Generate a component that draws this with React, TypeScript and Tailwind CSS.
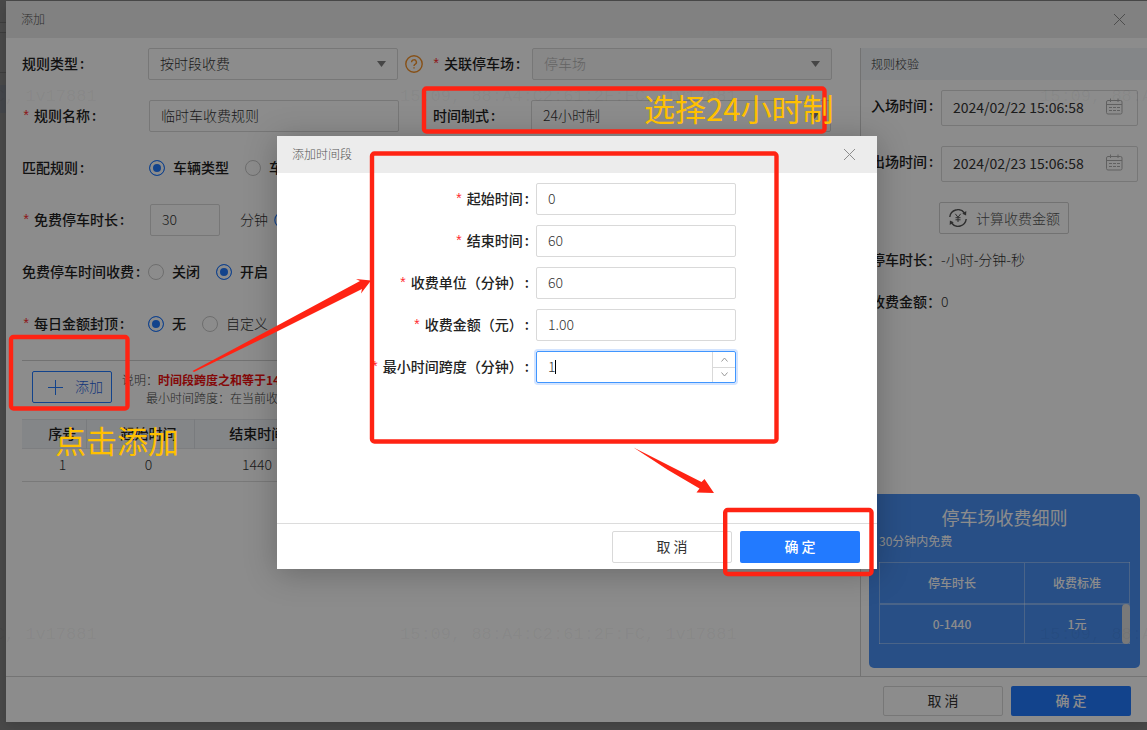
import type { ReactNode } from "react";

const inputClass =
  "h-8 rounded-xs border border-[#d9d9d9] bg-white px-[11px] pb-0.5 text-sm text-[#333] outline-none";

function Label({ children, required, htmlFor }: { children: ReactNode; required?: boolean; htmlFor?: string }) {
  return (
    <label htmlFor={htmlFor} className="flex items-center whitespace-nowrap pb-0.5 font-medium text-[#222]">
      {required && <span className="mr-1 w-2 pt-1 text-center font-['Liberation_Mono',monospace] font-normal text-[#ff2a2f]">*</span>}
      {children}
      <span className="ml-0.5">:</span>
    </label>
  );
}

function Select({ id, value, disabled, className }: { id: string; value: string; disabled?: boolean; className: string }) {
  return (
    <div className={`relative shrink-0 ${className}`}>
      <select
        id={id}
        disabled={disabled}
        className={`${inputClass} w-full appearance-none font-light disabled:bg-[#f7f7f7] disabled:text-[#b5b5b5] disabled:opacity-100`}
      >
        <option>{value}</option>
      </select>
      <svg className="pointer-events-none absolute right-3 top-[13px]" width="9" height="6" viewBox="0 0 9 6">
        <path d="M0 0h9L4.5 6z" fill="#808080" />
      </svg>
    </div>
  );
}

function Radio({ name, text, checked, light }: { name: string; text: string; checked?: boolean; light?: boolean }) {
  return (
    <label className={`flex items-center gap-2 whitespace-nowrap ${light ? "font-light text-[#333]" : "font-medium text-[#222]"}`}>
      <input
        type="radio"
        name={name}
        defaultChecked={checked}
        className="size-4 appearance-none rounded-full border border-[#c8c8c8] bg-white checked:border-[#227aff] checked:bg-[#227aff] checked:shadow-[inset_0_0_0_3px_#fff]"
      />
      <span className="pb-0.5">{text}</span>
    </label>
  );
}

function CloseIcon() {
  return (
    <svg width="11" height="11" viewBox="0 0 11 11" stroke="#8c8c8c" strokeWidth="1" fill="none">
      <path d="M0 0l11 11M11 0L0 11" />
    </svg>
  );
}

function CalendarIcon() {
  return (
    <svg width="17" height="17" viewBox="0 0 17 17" stroke="#b0b0b0" fill="none">
      <rect x="0.5" y="2.5" width="15.5" height="13.5" rx="1.5" />
      <path d="M0.5 6.5h15.5M4.5 0.5v3.5M12 0.5v3.5" />
      <path d="M3 9.5h3M7 9.5h3M11 9.5h3M3 12.5h3M7 12.5h3M11 12.5h3" />
    </svg>
  );
}

function YenCycleIcon() {
  return (
    <svg width="18" height="18" viewBox="0 0 18 18" stroke="#555" strokeWidth="1.4" fill="none">
      <path d="M0.8 8A8.2 8.2 0 0 1 15.5 4M17.2 10A8.2 8.2 0 0 1 2.5 14" />
      <path d="M17.3 2l-0.2 4.4-3.8-1.6zM0.7 16l0.2-4.4 3.8 1.6z" fill="#555" stroke="none" />
      <path d="M6.3 4.8l2.7 3.5 2.7-3.5M9 8.3v4.7M6.5 8.7h5M6.5 10.8h5" strokeWidth="1" />
    </svg>
  );
}

function DialogHeader({ title }: { title: string }) {
  return (
    <div className="flex h-[37px] shrink-0 items-center justify-between bg-[#ececec] pl-[15px] pr-[22px]">
      <h2 className="pb-0.5 text-xs font-light text-[#555]">{title}</h2>
      <button type="button" aria-label="关闭">
        <CloseIcon />
      </button>
    </div>
  );
}

function DialogButtons({ size }: { size: string }) {
  return (
    <>
      <button type="button" className={`${size} w-[120px] rounded-xs border border-[#d9d9d9] bg-white pb-0.5 text-[#333]`}>
        取 消
      </button>
      <button type="button" className={`${size} w-[120px] rounded-xs bg-[#227aff] pb-0.5 font-medium text-white`}>
        确 定
      </button>
    </>
  );
}

function RuleForm() {
  return (
    <main className="flex min-w-0 flex-1 flex-col pl-4 pr-3">
      <div className="flex h-[52px] items-center">
        <div className="w-[126px] shrink-0"><Label htmlFor="rule-type">规则类型</Label></div>
        <Select id="rule-type" value="按时段收费" className="w-[250px]" />
        <svg className="ml-[7px] mr-[9px] shrink-0" width="18" height="18" viewBox="0 0 18 18" fill="none" stroke="#f5932b" strokeWidth="1.4">
          <circle cx="9" cy="9" r="8.2" />
          <path d="M6.6 7.2a2.4 2.4 0 1 1 3.4 2.2c-.7.4-1 .7-1 1.5M9 12.2v1.4" />
        </svg>
        <div className="w-[100px] shrink-0"><Label required htmlFor="park">关联停车场</Label></div>
        <Select id="park" value="停车场" disabled className="w-[300px]" />
      </div>
      <div className="flex h-[52px] items-center">
        <div className="w-[127px] shrink-0"><Label required htmlFor="rule-name">规则名称</Label></div>
        <input id="rule-name" className={`${inputClass} w-[250px] font-light`} defaultValue="临时车收费规则" />
        <div className="ml-[34px] w-[98px] shrink-0"><Label htmlFor="time-format">时间制式</Label></div>
        <Select id="time-format" value="24小时制" className="w-[300px]" />
      </div>
      <div className="flex h-[52px] items-center">
        <div className="w-[127px] shrink-0"><Label>匹配规则</Label></div>
        <div className="flex gap-4">
          <Radio name="match" text="车辆类型" checked />
          <Radio name="match" text="车" />
        </div>
      </div>
      <div className="flex h-[52px] items-center">
        <div className="w-32 shrink-0"><Label required htmlFor="free-minutes">免费停车时长</Label></div>
        <input id="free-minutes" className={`${inputClass} w-[70px] font-light`} defaultValue="30" />
        <span className="ml-5 mr-1.5 pb-0.5 font-light text-[#333]">分钟</span>
        <svg width="16" height="16" viewBox="0 0 16 16" fill="none" stroke="#227aff" strokeWidth="1.2">
          <circle cx="8" cy="8" r="7.2" />
        </svg>
      </div>
      <div className="flex h-[52px] items-center">
        <div className="w-[126px] shrink-0"><Label>免费停车时间收费</Label></div>
        <div className="flex gap-4">
          <Radio name="free-charge" text="关闭" />
          <Radio name="free-charge" text="开启" checked />
        </div>
      </div>
      <div className="flex h-[52px] items-center">
        <div className="w-[126px] shrink-0"><Label required>每日金额封顶</Label></div>
        <div className="flex gap-4">
          <Radio name="daily-cap" text="无" checked />
          <Radio name="daily-cap" text="自定义" light />
        </div>
      </div>

      <div className="mt-2.5 border-t border-[#d0d0d0] pt-2.5">
        <div className="flex h-8 gap-2.5 pl-2.5">
          <button type="button" className="flex h-8 w-20 items-center justify-between rounded-xs border border-[#227aff] bg-white pl-[15px] pr-2 font-light text-[#1f5fe0]">
            <svg width="15" height="15" viewBox="0 0 15 15" stroke="#227aff">
              <path d="M7.5 0v15M0 7.5h15" />
            </svg>
            <span className="pb-0.5">添加</span>
          </button>
          <div className="text-xs leading-[18px] font-light text-[#444]">
            <p>说明：<b className="font-bold text-[#f01010]">时间段跨度之和等于14</b></p>
            <p className="pl-6">最小时间跨度：在当前收</p>
          </div>
        </div>
        <table className="mt-4 w-full table-fixed border-collapse text-center">
          <thead>
            <tr className="h-[29px] border-y border-[#e3e6ea] bg-[#f0f4f8] font-medium text-[#222]">
              <th className="w-16 border-r border-[#dde1e6] pb-0.5 pl-[17px] font-medium">序号</th>
              <th className="w-[108px] border-r border-[#dde1e6] pb-0.5 pl-[17px] font-medium">起始时间</th>
              <th className="w-[110px] pb-0.5 pl-4 font-medium">结束时间</th>
              <th></th>
            </tr>
          </thead>
          <tbody>
            <tr className="h-[33px] border-b border-[#dcdcdc] font-light text-[#333]">
              <td className="pb-0.5 pl-[17px]">1</td>
              <td className="pb-0.5 pl-[17px]">0</td>
              <td className="pb-0.5 pl-4">1440</td>
              <td></td>
            </tr>
          </tbody>
        </table>
      </div>
    </main>
  );
}

function DateField({ id, label, value }: { id: string; label: string; value: string }) {
  return (
    <div className="flex h-9 items-center">
      <div className="w-[70px] shrink-0 pb-1"><Label htmlFor={id}>{label}</Label></div>
      <div className="relative min-w-0 flex-1">
        <input id={id} className={`${inputClass} block h-9 w-full font-normal`} defaultValue={value} />
        <span className="pointer-events-none absolute right-[15px] top-2"><CalendarIcon /></span>
      </div>
    </div>
  );
}

function CheckPanel() {
  return (
    <aside className="mt-2.5 flex w-[287px] shrink-0 flex-col border-l border-[#d0d0d0]">
      <h3 className="flex h-8 items-center bg-[#f0f4f8] pl-2.5 text-xs font-light text-[#333]">规则校验</h3>
      <div className="flex flex-col gap-5 pl-2.5 pr-[9px] pt-2.5">
        <DateField id="enter" label="入场时间" value="2024/02/22 15:06:58" />
        <DateField id="leave" label="出场时间" value="2024/02/23 15:06:58" />
        <button type="button" className="ml-[68px] flex h-8 w-[130px] items-center gap-[9px] rounded-xs border border-[#d0d0d0] bg-white pl-[9px] font-light text-[#555]">
          <YenCycleIcon />
          计算收费金额
        </button>
      </div>
      <dl className="mt-1 grid grid-cols-[70px_1fr] pl-2.5 leading-[42px]">
        <dt className="font-medium text-[#222]">停车时长：</dt>
        <dd className="font-light text-[#333]">-小时-分钟-秒</dd>
        <dt className="font-medium text-[#222]">收费金额：</dt>
        <dd className="font-light text-[#333]">0</dd>
      </dl>
      <section className="mb-2 ml-2 mr-[7px] mt-auto h-[174px] rounded-[5px] bg-[#4990f4] px-2.5 pt-[9px] text-xs text-white">
        <h3 className="text-center text-lg leading-7">停车场收费细则</h3>
        <p className="leading-5">30分钟内免费</p>
        <div className="relative mt-[11px]">
          <table className="w-full table-fixed border-collapse text-center">
            <thead>
              <tr className="h-[41px] border border-b-2 border-white/35">
                <th className="w-[145px] border-r border-white/35 font-medium">停车时长</th>
                <th className="font-medium">收费标准</th>
              </tr>
            </thead>
            <tbody>
              <tr className="h-10 border border-white/35 font-medium">
                <td className="border-r border-white/35">0-1440</td>
                <td>1元</td>
              </tr>
            </tbody>
          </table>
          <div className="absolute bottom-0 right-0 h-10 w-2 rounded-full bg-[#dcdcdc]"></div>
        </div>
      </section>
    </aside>
  );
}

function ModalRow({ id, label, children }: { id: string; label: string; children: ReactNode }) {
  return (
    <div className="flex h-8 items-center">
      <div className="mr-[7px] flex w-[252px] shrink-0 justify-end"><Label required htmlFor={id}>{label}</Label></div>
      {children}
    </div>
  );
}

const modalFields = [
  { id: "start", label: "起始时间", value: "0" },
  { id: "end", label: "结束时间", value: "60" },
  { id: "unit", label: "收费单位（分钟）", value: "60" },
  { id: "amount", label: "收费金额（元）", value: "1.00" },
];

function PeriodModal() {
  return (
    <div className="absolute inset-0 flex items-start justify-center bg-black/45 pl-[7px] pt-[136px]">
      <div role="dialog" className="flex w-[600px] flex-col bg-white shadow-[0_4px_30px_rgba(0,0,0,0.25)]">
        <DialogHeader title="添加时间段" />
        <div className="flex h-[350px] flex-col gap-2.5 pt-2.5">
          {modalFields.map((f) => (
            <ModalRow key={f.id} id={f.id} label={f.label}>
              <input id={f.id} className={`${inputClass} w-[200px] font-light`} defaultValue={f.value} />
            </ModalRow>
          ))}
          <ModalRow id="span" label="最小时间跨度（分钟）">
            <div className="relative flex h-8 w-[200px] rounded-xs border border-[#4096ff] shadow-[0_0_0_2px_rgba(34,122,255,0.2)]">
              <input id="span" className="min-w-0 flex-1 px-[11px] pb-0.5 font-light text-[#333] outline-none" defaultValue="1" />
              <span className="absolute left-[18px] top-2 h-3.5 w-px bg-black"></span>
              <div className="flex w-[23px] flex-col border-l border-[#d9d9d9]">
                <button type="button" aria-label="增加" className="flex flex-1 items-center justify-center border-b border-[#d9d9d9]">
                  <svg width="7" height="5" viewBox="0 0 7 5" fill="none" stroke="#999"><path d="M0.5 4.5l3-3.5 3 3.5" /></svg>
                </button>
                <button type="button" aria-label="减少" className="flex flex-1 items-center justify-center">
                  <svg width="7" height="5" viewBox="0 0 7 5" fill="none" stroke="#999"><path d="M0.5 0.5l3 3.5 3-3.5" /></svg>
                </button>
              </div>
            </div>
          </ModalRow>
        </div>
        <div className="flex justify-end gap-2 border-t border-[#dcdcdc] pb-1.5 pr-[17px] pt-[7px]">
          <DialogButtons size="h-8" />
        </div>
      </div>
    </div>
  );
}

// Tutorial marks drawn over the dialogs
function Annotations() {
  return (
    <div className="pointer-events-none absolute left-0 top-0">
      <svg width="1147" height="730" viewBox="0 0 1147 730" fill="none">
        <g stroke="#ff2313" strokeWidth="4.4">
          <rect x="11" y="337" width="116.5" height="71.5" rx="2.5" />
          <rect x="424" y="88.5" width="400.5" height="43" rx="2.5" />
          <rect x="372" y="153.5" width="404.5" height="288" rx="2.5" />
          <rect x="725.2" y="510" width="146.3" height="64" rx="2.5" />
        </g>
        <g fill="#ff2313">
          <path d="M192.5 371L270 329.5L360 281L356 279L371 280.5L361 293.5L362 289L272 334L194 372Z" />
          <path d="M633.5 447.5L701.5 482L704.5 479L714 493L696.5 492.5L699.5 488.5L668 470Z" />
        </g>
      </svg>
      <span className="absolute left-[644px] top-[88px] whitespace-nowrap text-[31px] leading-10 text-[#ffc000]">选择24小时制</span>
      <span className="absolute left-[55px] top-[420px] whitespace-nowrap text-[31px] leading-10 text-[#ffc000]">点击添加</span>
    </div>
  );
}

function Watermark() {
  const text = "15:09, 88:A4:C2:61:2F:FC, 1v17881";
  return (
    <div aria-hidden="true" className="pointer-events-none absolute inset-0 overflow-hidden font-['Liberation_Mono',monospace] text-[17px] leading-6 text-black/5">
      {["top-[85px]", "top-[623px]"].map((top) => (
        <div key={top} className={`absolute -left-[240px] flex ${top}`}>
          {[0, 1, 2].map((i) => (
            <span key={i} className="w-[640px] shrink-0 whitespace-pre">{text}</span>
          ))}
        </div>
      ))}
    </div>
  );
}

export default function App() {
  return (
    <div className="relative flex min-h-screen overflow-hidden bg-[#868686] pb-2 pt-px font-['Noto_Sans_CJK_SC',sans-serif] text-sm">
      {/* Page behind the dialog */}
      <div className="w-1.5 shrink-0 pt-[21px]">
        <div className="h-[11px] border-y border-[#707070] bg-[#8a8a8a]"></div>
        <div className="h-10 border-b border-[#707070]"></div>
        <div className="mt-3 h-7 bg-[#7c8088]"></div>
      </div>
      <div role="dialog" className="flex min-w-0 flex-1 flex-col bg-white shadow-[0_4px_12px_rgba(0,0,0,0.15)]">
        <DialogHeader title="添加" />
        <div className="flex flex-1">
          <RuleForm />
          <CheckPanel />
        </div>
        <div className="flex justify-end gap-2 border-t border-[#d4d4d4] pb-1.5 pr-4 pt-[9px]">
          <DialogButtons size="h-[30px]" />
        </div>
      </div>
      <Watermark />
      <PeriodModal />
      <Annotations />
    </div>
  );
}
